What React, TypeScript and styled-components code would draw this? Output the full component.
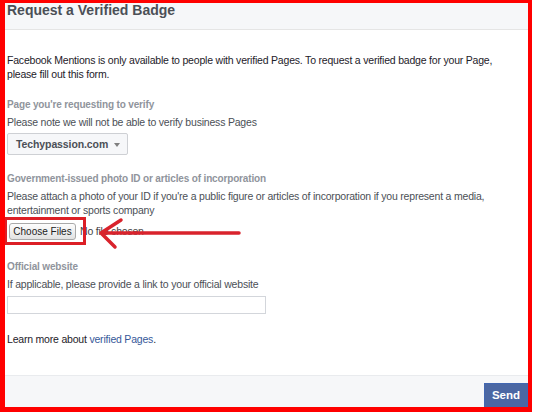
import React from "react";
import styled, { createGlobalStyle } from "styled-components";

const GlobalStyle = createGlobalStyle`
  html, body {
    margin: 0;
    padding: 0;
    background: #fff;
  }
  body {
    font-family: "Liberation Sans", Arial, Helvetica, sans-serif;
    -webkit-font-smoothing: antialiased;
  }
`;

const Frame = styled.div`
  box-sizing: border-box;
  width: 532px;
  height: 412px;
  border-style: solid;
  border-color: #ff0000;
  border-width: 3px 4px 5px 5px;
  display: flex;
  flex-direction: column;
  overflow: hidden;
  background: #fff;
`;

const Header = styled.div`
  height: 26px;
  background: #f6f7f9;
  border-bottom: 1px solid #e5e5e5;
  padding-left: 2px;
  flex-shrink: 0;
`;

const Title = styled.h2`
  margin: 0;
  font-size: 14px;
  line-height: 14px;
  font-weight: bold;
  color: #4b4f56;
`;

const Body = styled.div`
  flex: 1;
  padding: 23px 20px 0 2px;
  font-size: 10.5px;
  letter-spacing: -0.2px;
  line-height: 14px;
  color: #1d2129;
`;

const Paragraph = styled.p<{ $top?: number }>`
  margin: ${(p) => p.$top ?? 0}px 0 0;
`;

const Label = styled.div<{ $top?: number }>`
  margin-top: ${(p) => p.$top ?? 17}px;
  font-size: 10px;
  letter-spacing: -0.15px;
  font-weight: bold;
  color: #90949c;
`;

const Hint = styled.div`
  margin-top: 3px;
  color: #4b4f56;
`;

const PageSelect = styled.button`
  box-sizing: border-box;
  margin-top: 4px;
  width: 121px;
  height: 22px;
  display: flex;
  align-items: center;
  gap: 6px;
  padding: 0 0 0 8px;
  background: #f6f7f9;
  border: 1px solid #ced0d4;
  border-radius: 2px;
  font-family: inherit;
  font-size: 10.5px;
  letter-spacing: -0.1px;
  font-weight: bold;
  color: #4b4f56;
`;

const Caret = styled.span`
  width: 0;
  height: 0;
  border-left: 3.5px solid transparent;
  border-right: 3.5px solid transparent;
  border-top: 4px solid #7f7f7f;
  margin-top: 1px;
`;

const FileRow = styled.div`
  position: relative;
  margin-top: 4px;
  height: 20px;
  display: flex;
  align-items: center;
  gap: 4px;
`;

const FileButton = styled.button`
  box-sizing: border-box;
  margin-left: 2px;
  width: 67px;
  height: 17px;
  padding: 0;
  font-family: inherit;
  font-size: 10px;
  color: #222;
  background: linear-gradient(#fdfdfd, #e2e2e2);
  border: 1px solid #a9a9a9;
  border-radius: 3px;
`;

const FileStatus = styled.span`
  color: #444;
`;

const Highlight = styled.div`
  position: absolute;
  left: -3px;
  top: -4px;
  width: 82px;
  height: 28px;
  box-sizing: border-box;
  border: 3px solid #dc1f26;
`;

const Arrow = styled.svg`
  position: absolute;
  left: 0;
  top: -10px;
`;

const UrlInput = styled.input`
  box-sizing: border-box;
  display: block;
  margin-top: 5px;
  width: 259px;
  height: 18px;
  border: 1px solid #d3d6db;
  background: #fff;
`;

const Link = styled.a`
  color: #365899;
  text-decoration: none;
`;

const Footer = styled.div`
  flex-shrink: 0;
  height: 24px;
  background: #f6f7f9;
  border-top: 1px solid #e9ebee;
  display: flex;
  justify-content: flex-end;
  align-items: flex-start;
  padding-top: 7px;
`;

const SendButton = styled.button`
  flex-shrink: 0;
  width: 44px;
  height: 28px;
  padding: 0 0 4px;
  border: 1px solid #4267b2;
  background: #4b67a3;
  color: #fff;
  font-family: inherit;
  font-size: 11.5px;
  font-weight: bold;
`;

export default function App() {
  return (
    <>
      <GlobalStyle />
      <Frame>
        <Header>
          <Title>Request a Verified Badge</Title>
        </Header>
        <Body>
          <Paragraph>
            Facebook Mentions is only available to people with verified Pages. To request a
            verified badge for your Page, please fill out this form.
          </Paragraph>

          <Label>Page you're requesting to verify</Label>
          <Hint>Please note we will not be able to verify business Pages</Hint>
          <PageSelect>
            Techypassion.com <Caret />
          </PageSelect>

          <Label>Government-issued photo ID or articles of incorporation</Label>
          <Hint>
            Please attach a photo of your ID if you're a public figure or articles of
            incorporation if you represent a media, entertainment or sports company
          </Hint>
          <FileRow>
            <FileButton>Choose Files</FileButton>
            <FileStatus>No file chosen</FileStatus>
            <Highlight />
            <Arrow width="240" height="44" viewBox="0 0 240 44">
              <g stroke="#d9232c" strokeWidth="3.5" strokeLinecap="round" fill="none">
                <line x1="95" y1="22" x2="232" y2="22" />
                <polyline points="114,9 94,22 108,36" strokeLinejoin="round" />
              </g>
            </Arrow>
          </FileRow>

          <Label $top={19}>Official website</Label>
          <Hint>If applicable, please provide a link to your official website</Hint>
          <UrlInput type="text" />

          <Paragraph $top={18}>
            Learn more about <Link href="#">verified Pages</Link>.
          </Paragraph>
        </Body>
        <Footer>
          <SendButton>Send</SendButton>
        </Footer>
      </Frame>
    </>
  );
}
